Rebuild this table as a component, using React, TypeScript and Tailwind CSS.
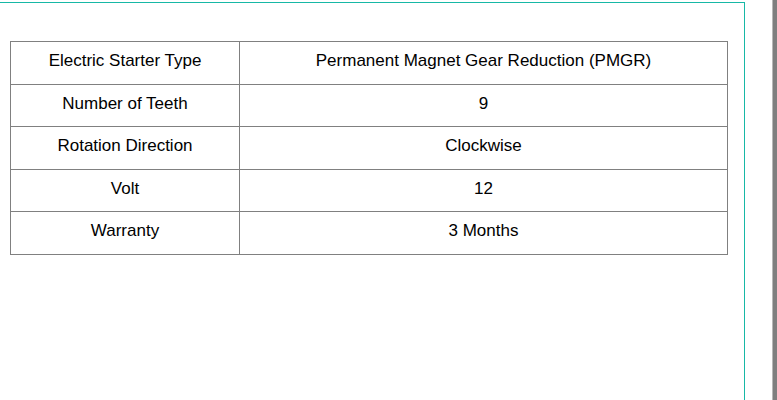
const specs = [
  { label: 'Electric Starter Type', value: 'Permanent Magnet Gear Reduction (PMGR)' },
  { label: 'Number of Teeth', value: '9' },
  { label: 'Rotation Direction', value: 'Clockwise' },
  { label: 'Volt', value: '12' },
  { label: 'Warranty', value: '3 Months' },
]

export default function App() {
  return (
    <div className="flex h-[400px] w-[777px] overflow-hidden bg-white font-['Liberation_Sans',Arial,sans-serif] text-black">
      <div className="mt-[2px] w-[745px] shrink-0 border-t border-r border-[#17b8a6]">
        <div className="pl-[10px] pt-[38px]">
          <table className="w-[718px] border-collapse text-[17px] leading-[20px]">
            <tbody>
              {specs.map((row) => (
                <tr key={row.label}>
                  <td className="w-[229px] border border-[#808080] px-2 pt-[9px] pb-[12.6px] text-center">{row.label}</td>
                  <td className="border border-[#808080] px-2 pt-[9px] pb-[12.6px] text-center">{row.value}</td>
                </tr>
              ))}
            </tbody>
          </table>
        </div>
      </div>
      <div className="ml-auto h-full w-[5px] border-l border-[#b8b8b8] bg-[#7f7f7f]" />
    </div>
  )
}
